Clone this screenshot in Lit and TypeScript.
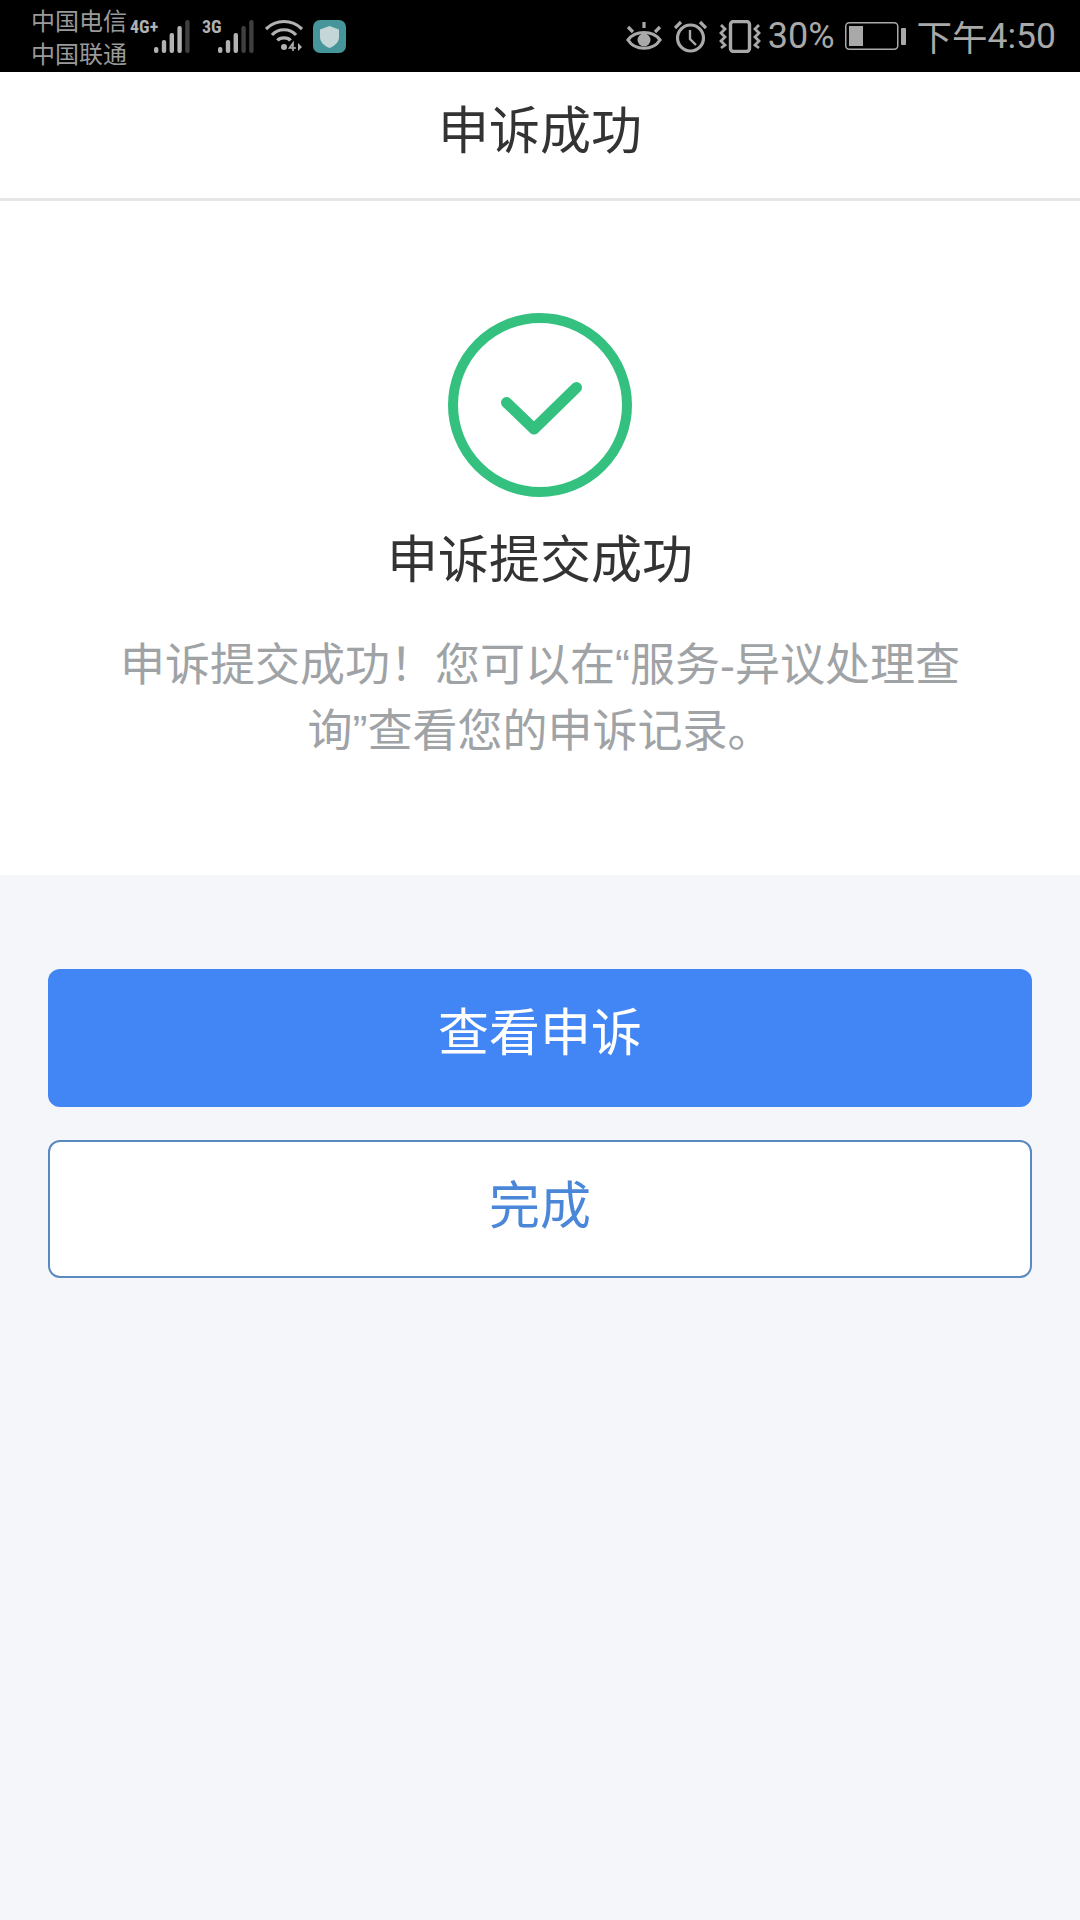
import { LitElement, html, css, svg } from "lit";
import { customElement } from "lit/decorators.js";

const bars = (filled: number) => svg`
  <svg class="bars" width="36" height="36" viewBox="0 0 36 36">
  ${[0, 1, 2, 3, 4].map((i) => {
    const h = [6, 13, 20, 27, 33][i];
    const x = i * 7.8;
    return svg`<rect x=${x} y=${35 - h} width="4.4" height=${h} rx="2" fill=${i < filled ? "#b2b2b2" : "#3f3f3f"}></rect>`;
  })}
  </svg>`;

@customElement("app-root")
export class AppRoot extends LitElement {
  static styles = css`
    :host {
      display: block;
      width: 1080px;
      height: 1920px;
      background: #f4f6fa;
      font-family: "Noto Sans CJK SC", "Noto Sans", sans-serif;
      overflow: hidden;
    }
    .status {
      height: 72px;
      background: #000;
      color: #a9a9a9;
      display: flex;
      justify-content: space-between;
      align-items: center;
      padding: 0 24px 0 31px;
    }
    .group {
      display: flex;
      align-items: center;
    }
    .carrier {
      width: 99px;
      font-size: 24px;
      line-height: 33px;
      white-space: nowrap;
      color: #9a9a9a;
    }
    svg {
      display: block;
      flex: none;
    }
    .net {
      display: flex;
      align-items: center;
    }
    .net-label {
      align-self: flex-start;
      font-family: "Liberation Sans Narrow", "Roboto Condensed", "Liberation Sans", sans-serif;
      font-weight: 700;
      font-size: 18px;
      line-height: 18px;
      color: #b2b2b2;
      white-space: nowrap;
    }
    .net-4g .net-label { width: 24px; }
    .net-3g { margin-left: 12px; }
    .net-3g .net-label { width: 16px; }
    .wifi { margin-left: 11px; }
    .app { margin-left: 10px; }
    .alarm { margin-left: 12px; }
    .vib { margin-left: 12px; }
    .pct {
      margin-left: 7px;
      font-family: "Roboto", sans-serif;
      font-size: 36px;
      line-height: 40px;
      color: #a9a9a9;
    }
    .batt { margin-left: 10px; }
    .time {
      margin-left: 11px;
      font-size: 35.5px;
      line-height: 40px;
      display: flex;
      align-items: center;
    }
    .time span {
      font-family: "Roboto", sans-serif;
    }
    .header {
      background: #fff;
      border-bottom: 3px solid #e6e6e8;
      display: flex;
      align-items: center;
      justify-content: center;
      padding-bottom: 16px;
      height: 110px;
      font-size: 51px;
      color: #333;
    }
    .result {
      background: #fff;
      height: 674px;
      display: flex;
      flex-direction: column;
      align-items: center;
      padding-top: 112px;
      box-sizing: border-box;
    }
    .result-title {
      margin-top: 23px;
      font-size: 51px;
      line-height: 72px;
      color: #333;
    }
    .desc {
      margin-top: 41px;
      width: 850px;
      text-align: center;
      font-family: "Liberation Sans", "Noto Sans CJK SC", sans-serif;
      font-size: 45px;
      line-height: 66px;
      color: #a0a3a6;
    }
    .actions {
      padding: 94px 48px 0;
      display: flex;
      flex-direction: column;
      gap: 33px;
    }
    .btn {
      height: 138px;
      box-sizing: border-box;
      border-radius: 12px;
      display: flex;
      align-items: center;
      justify-content: center;
      font-size: 51px;
    }
    .primary {
      background: #4285f4;
      color: #fff;
      padding-bottom: 18px;
    }
    .secondary {
      background: #fff;
      border: 2px solid #5a88c0;
      color: #4a87d8;
      padding-bottom: 14px;
    }
  `;

  render() {
    return html`
      <div class="status">
        <div class="group">
          <div class="carrier">中国电信<br />中国联通</div>
          <div class="net net-4g"><span class="net-label">4G+</span>${bars(4)}</div>
          <div class="net net-3g"><span class="net-label">3G</span>${bars(3)}</div>
          <svg class="wifi" width="38" height="34" viewBox="0 0 38 34" fill="none" stroke="#b2b2b2" stroke-width="3.2">
            <path d="M1 10 C11 0 27 0 37 10"></path>
            <path d="M7 16 C13 9 25 9 31 16"></path>
            <path d="M12.5 21.5 C15 18 23 18 25.5 21.5"></path>
            <circle cx="19" cy="28" r="3" fill="#b2b2b2" stroke="none"></circle>
            <path d="M28 32 V24 L24.5 29 H31" stroke-width="1.6"></path>
            <path d="M33 24 L37 28 L33 32 Z" fill="#b2b2b2" stroke="none"></path>
          </svg>
          <svg class="app" width="33" height="33" viewBox="0 0 33 33">
            <rect width="33" height="33" rx="7" fill="#45959b"></rect>
            <path d="M16.5 6 L26 9.5 V17 C26 22.5 21.5 26 16.5 28 C11.5 26 7 22.5 7 17 V9.5 Z" fill="#c4d6d8"></path>
          </svg>
        </div>
        <div class="group">
          <svg width="36" height="30" viewBox="0 0 36 30" fill="none" stroke="#a9a9a9" stroke-width="3.2">
            <path d="M2 19 C9 9 27 9 34 19 C27 30 9 30 2 19 Z"></path>
            <circle cx="18" cy="19" r="6.5" fill="#a9a9a9" stroke="none"></circle>
            <path d="M18 1 V7 M2 6 L7 11 M34 6 L29 11"></path>
          </svg>
          <svg class="alarm" width="33" height="33" viewBox="0 0 33 33" fill="none" stroke="#a9a9a9" stroke-width="3.2">
            <circle cx="16.5" cy="18" r="13"></circle>
            <path d="M16 10 V19 L22 25" stroke-width="2.4"></path>
            <path d="M1 8 L7 2 M32 8 L26 2"></path>
          </svg>
          <svg class="vib" width="42" height="33" viewBox="0 0 42 33" fill="none" stroke="#a9a9a9">
            <rect x="11.5" y="1.5" width="19" height="30" rx="3" stroke-width="3.4"></rect>
            <path d="M2 5 L6 9 L2 13 L6 17 L2 21 L6 25 L2 28" stroke-width="2.8"></path>
            <path d="M40 5 L36 9 L40 13 L36 17 L40 21 L36 25 L40 28" stroke-width="2.8"></path>
          </svg>
          <div class="pct">30%</div>
          <svg class="batt" width="61" height="28" viewBox="0 0 61 28">
            <rect x="0.75" y="0.75" width="52" height="26.5" rx="3.5" fill="none" stroke="#a9a9a9" stroke-width="1.5"></rect>
            <rect x="4" y="4" width="14" height="20" fill="#a9a9a9"></rect>
            <rect x="56" y="6" width="5" height="17" rx="1" fill="#a9a9a9"></rect>
          </svg>
          <div class="time">下午<span>4:50</span></div>
        </div>
      </div>
      <div class="header">申诉成功</div>
      <div class="result">
        <svg width="184" height="184" viewBox="0 0 184 184" fill="none" stroke="#34c07f">
          <circle cx="92" cy="92" r="87" stroke-width="10"></circle>
          <path d="M58.5 89.5 L86 116 L128.5 74.5" stroke-width="11" stroke-linecap="round" stroke-linejoin="round"></path>
        </svg>
        <div class="result-title">申诉提交成功</div>
        <div class="desc">申诉提交成功！您可以在“服务-异议处理查询”查看您的申诉记录。</div>
      </div>
      <div class="actions">
        <div class="btn primary">查看申诉</div>
        <div class="btn secondary">完成</div>
      </div>
    `;
  }
}
